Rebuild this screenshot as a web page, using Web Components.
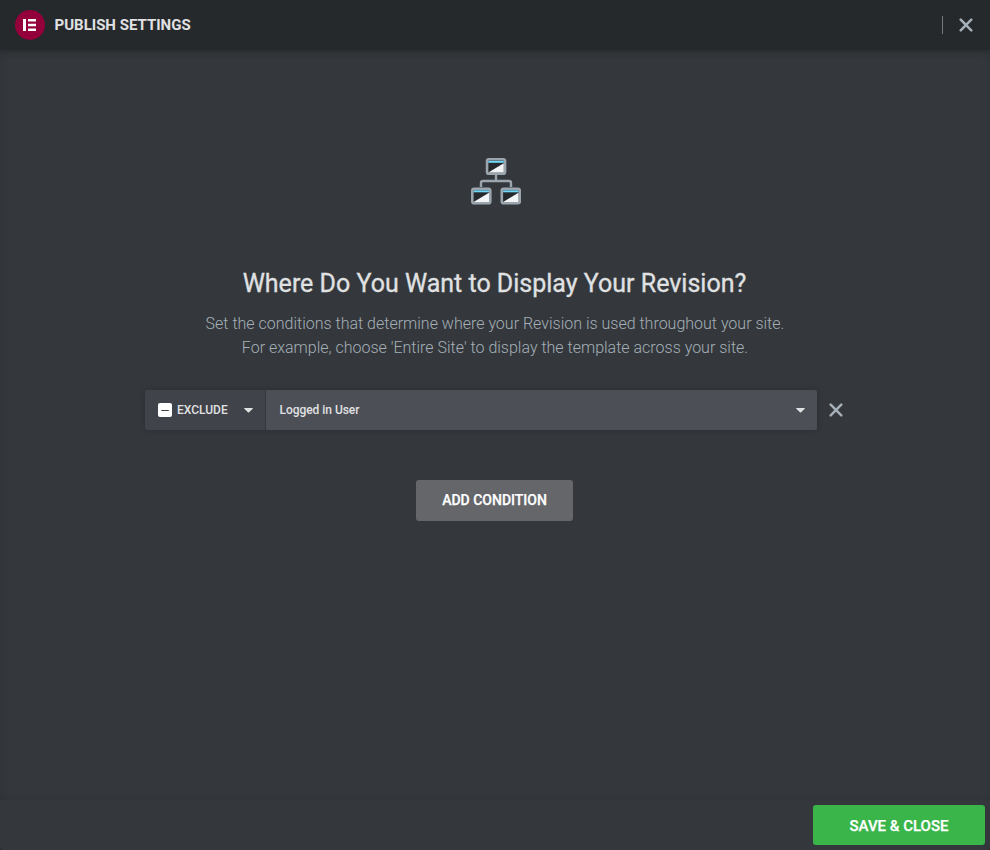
<!DOCTYPE html>
<html lang="en"><head><meta charset="utf-8"><title>Publish Settings</title>
<style>
body{margin:0;background:#202326}
</style></head><body>
<publish-dialog>
  <dialog-header slot="header">PUBLISH SETTINGS</dialog-header>
  <conditions-intro>
    <span slot="title">Where Do You Want to Display Your Revision?</span>
    <span slot="line1">Set the conditions that determine where your Revision is used throughout your site.</span>
    <span slot="line2">For example, choose 'Entire Site' to display the template across your site.</span>
  </conditions-intro>
  <condition-row><span slot="type">EXCLUDE</span><span slot="name">Logged in User</span></condition-row>
  <action-button class="add">ADD CONDITION</action-button>
  <action-button slot="footer" variant="success">SAVE &amp; CLOSE</action-button>
</publish-dialog>
<script>
const define = (name, html) => customElements.define(name, class extends HTMLElement {
  constructor() { super(); this.attachShadow({mode: 'open'}).innerHTML = html; }
});
define('close-icon', `<style>:host{display:block;width:14px;height:14px;color:#a4afb7}svg{display:block}</style>
<svg width="14" height="14" viewBox="0 0 14 14" fill="none" stroke="currentColor" stroke-width="2.5" stroke-linecap="round"><path d="M1.7 1.7 12.3 12.3M12.3 1.7 1.7 12.3"/></svg>`);
define('caret-icon', `<style>:host{display:block;width:9px;height:5px}svg{display:block}</style>
<svg width="9" height="5" viewBox="0 0 9 5"><path d="M.5 0h8q.5.2.2.7L5.1 4.2q-.6.5-1.2 0L.3.7Q0 .2.5 0Z" fill="#e0e1e3"/></svg>`);
define('dialog-header', `<style>
:host{display:flex;align-items:center;height:50px;padding:0 17px 0 15px;box-sizing:border-box;background:#26292c;box-shadow:0 0 8px rgba(0,0,0,.25);position:relative;border-radius:3px 3px 0 0}
.title{margin-left:9.5px;font-weight:700;font-size:15px;line-height:20px;color:#e0e1e3}
.rule{width:1px;height:18px;background:#76797c;margin-left:auto;margin-right:16px}
</style>
<svg width="30" height="30" viewBox="0 0 30 30"><circle cx="15" cy="15" r="15" fill="#93003c"/><path fill="#fff" d="M8 9h3v12H8zM13 9h8v2.4h-8zM13 13.8h8v2.4h-8zM13 18.6h8V21h-8z"/></svg>
<span class="title"><slot></slot></span><span class="rule"></span><close-icon></close-icon>`);
define('conditions-intro', `<style>
:host{display:flex;flex-direction:column;align-items:center}
svg{display:block;margin-left:2px}
.title{margin-top:64px;margin-right:1px;font-size:25px;line-height:30px;font-weight:400;-webkit-text-stroke:.3px #e0e1e3;color:#e0e1e3;white-space:nowrap}
.copy{margin-top:13px;font-size:16px;line-height:24px;font-weight:300;color:#a4afb7;text-align:center;white-space:nowrap}
</style>
<svg width="50" height="47" viewBox="0 0 50 47">
<defs><g id="w"><rect x="1.3" y="1.3" width="18" height="14.5" rx="1.8" fill="#26292c" stroke="#9ba5ad" stroke-width="2.6"/><path d="M2.6 2.8h15.4v2H2.6z" fill="#71d7f7"/><path d="M2.6 14.5 18 5.2V14.5Z" fill="#f3f4f5"/></g></defs>
<path d="M25 17v6M10 29v-4q0-2 2-2h26q2 0 2 2v4" fill="none" stroke="#9ba5ad" stroke-width="2.4"/>
<use href="#w" x="14.75"/><use href="#w" y="29.5"/><use href="#w" x="29.5" y="29.5"/></svg>
<div class="title"><slot name="title"></slot></div>
<div class="copy"><slot name="line1"></slot><br><slot name="line2"></slot></div>`);
define('condition-row', `<style>
:host{display:flex;align-items:center;width:698px;height:40px;margin-top:30px;margin-right:2px;font-size:12px;font-weight:500;color:#e0e1e3}
.fields{display:flex;width:672px;height:40px;box-shadow:0 0 6px rgba(0,0,0,.18);border-radius:2px;overflow:hidden}
.type{display:flex;align-items:center;width:120px;box-sizing:border-box;padding:0 12px 0 13px;background:#404349}
.type svg{margin-right:5px}.type caret-icon{margin-left:auto}
.name{display:flex;align-items:center;justify-content:space-between;flex:1;padding:0 12px 0 13.5px;background:#4c4f56;border-left:1px solid #34383c}
.name slot{letter-spacing:-.04px}
close-icon{margin-left:11.5px}
</style><div class="fields"><div class="type"><svg width="14" height="14" viewBox="0 0 14 14"><rect width="14" height="14" rx="2" fill="#fff"/><path d="M3.3 7.5h7.5" stroke="#404349"/></svg><slot name="type"></slot><caret-icon></caret-icon></div>
<div class="name"><slot name="name"></slot><caret-icon></caret-icon></div></div><close-icon></close-icon>`);
define('action-button', `<style>
:host{display:block}
button{display:block;width:157px;height:41px;padding:0 0 2px;border:0;border-radius:3px;background:#64666a;color:#fff;font:500 14px Roboto,sans-serif;-webkit-text-stroke:.25px #fff}
:host([variant=success]) button{width:172px;height:40px;padding:2px 0 0;background:#39b54a;font-size:15px}
</style><button><slot></slot></button>`);
define('publish-dialog', `<style>
:host{display:flex;flex-direction:column;width:990px;height:850px;background:#34383c;font-family:Roboto,sans-serif;border-radius:3px;overflow:hidden}
main{flex:1;display:flex;flex-direction:column;align-items:center;padding-top:108px;box-sizing:border-box;box-shadow:inset 0 0 8px rgba(0,0,0,.12)}
footer{height:50px;display:flex;align-items:center;justify-content:flex-end;padding-right:5px}
::slotted(.add){margin-top:50px;margin-right:1px}
</style><slot name="header"></slot><main><slot></slot></main><footer><slot name="footer"></slot></footer>`);
</script></body></html>
